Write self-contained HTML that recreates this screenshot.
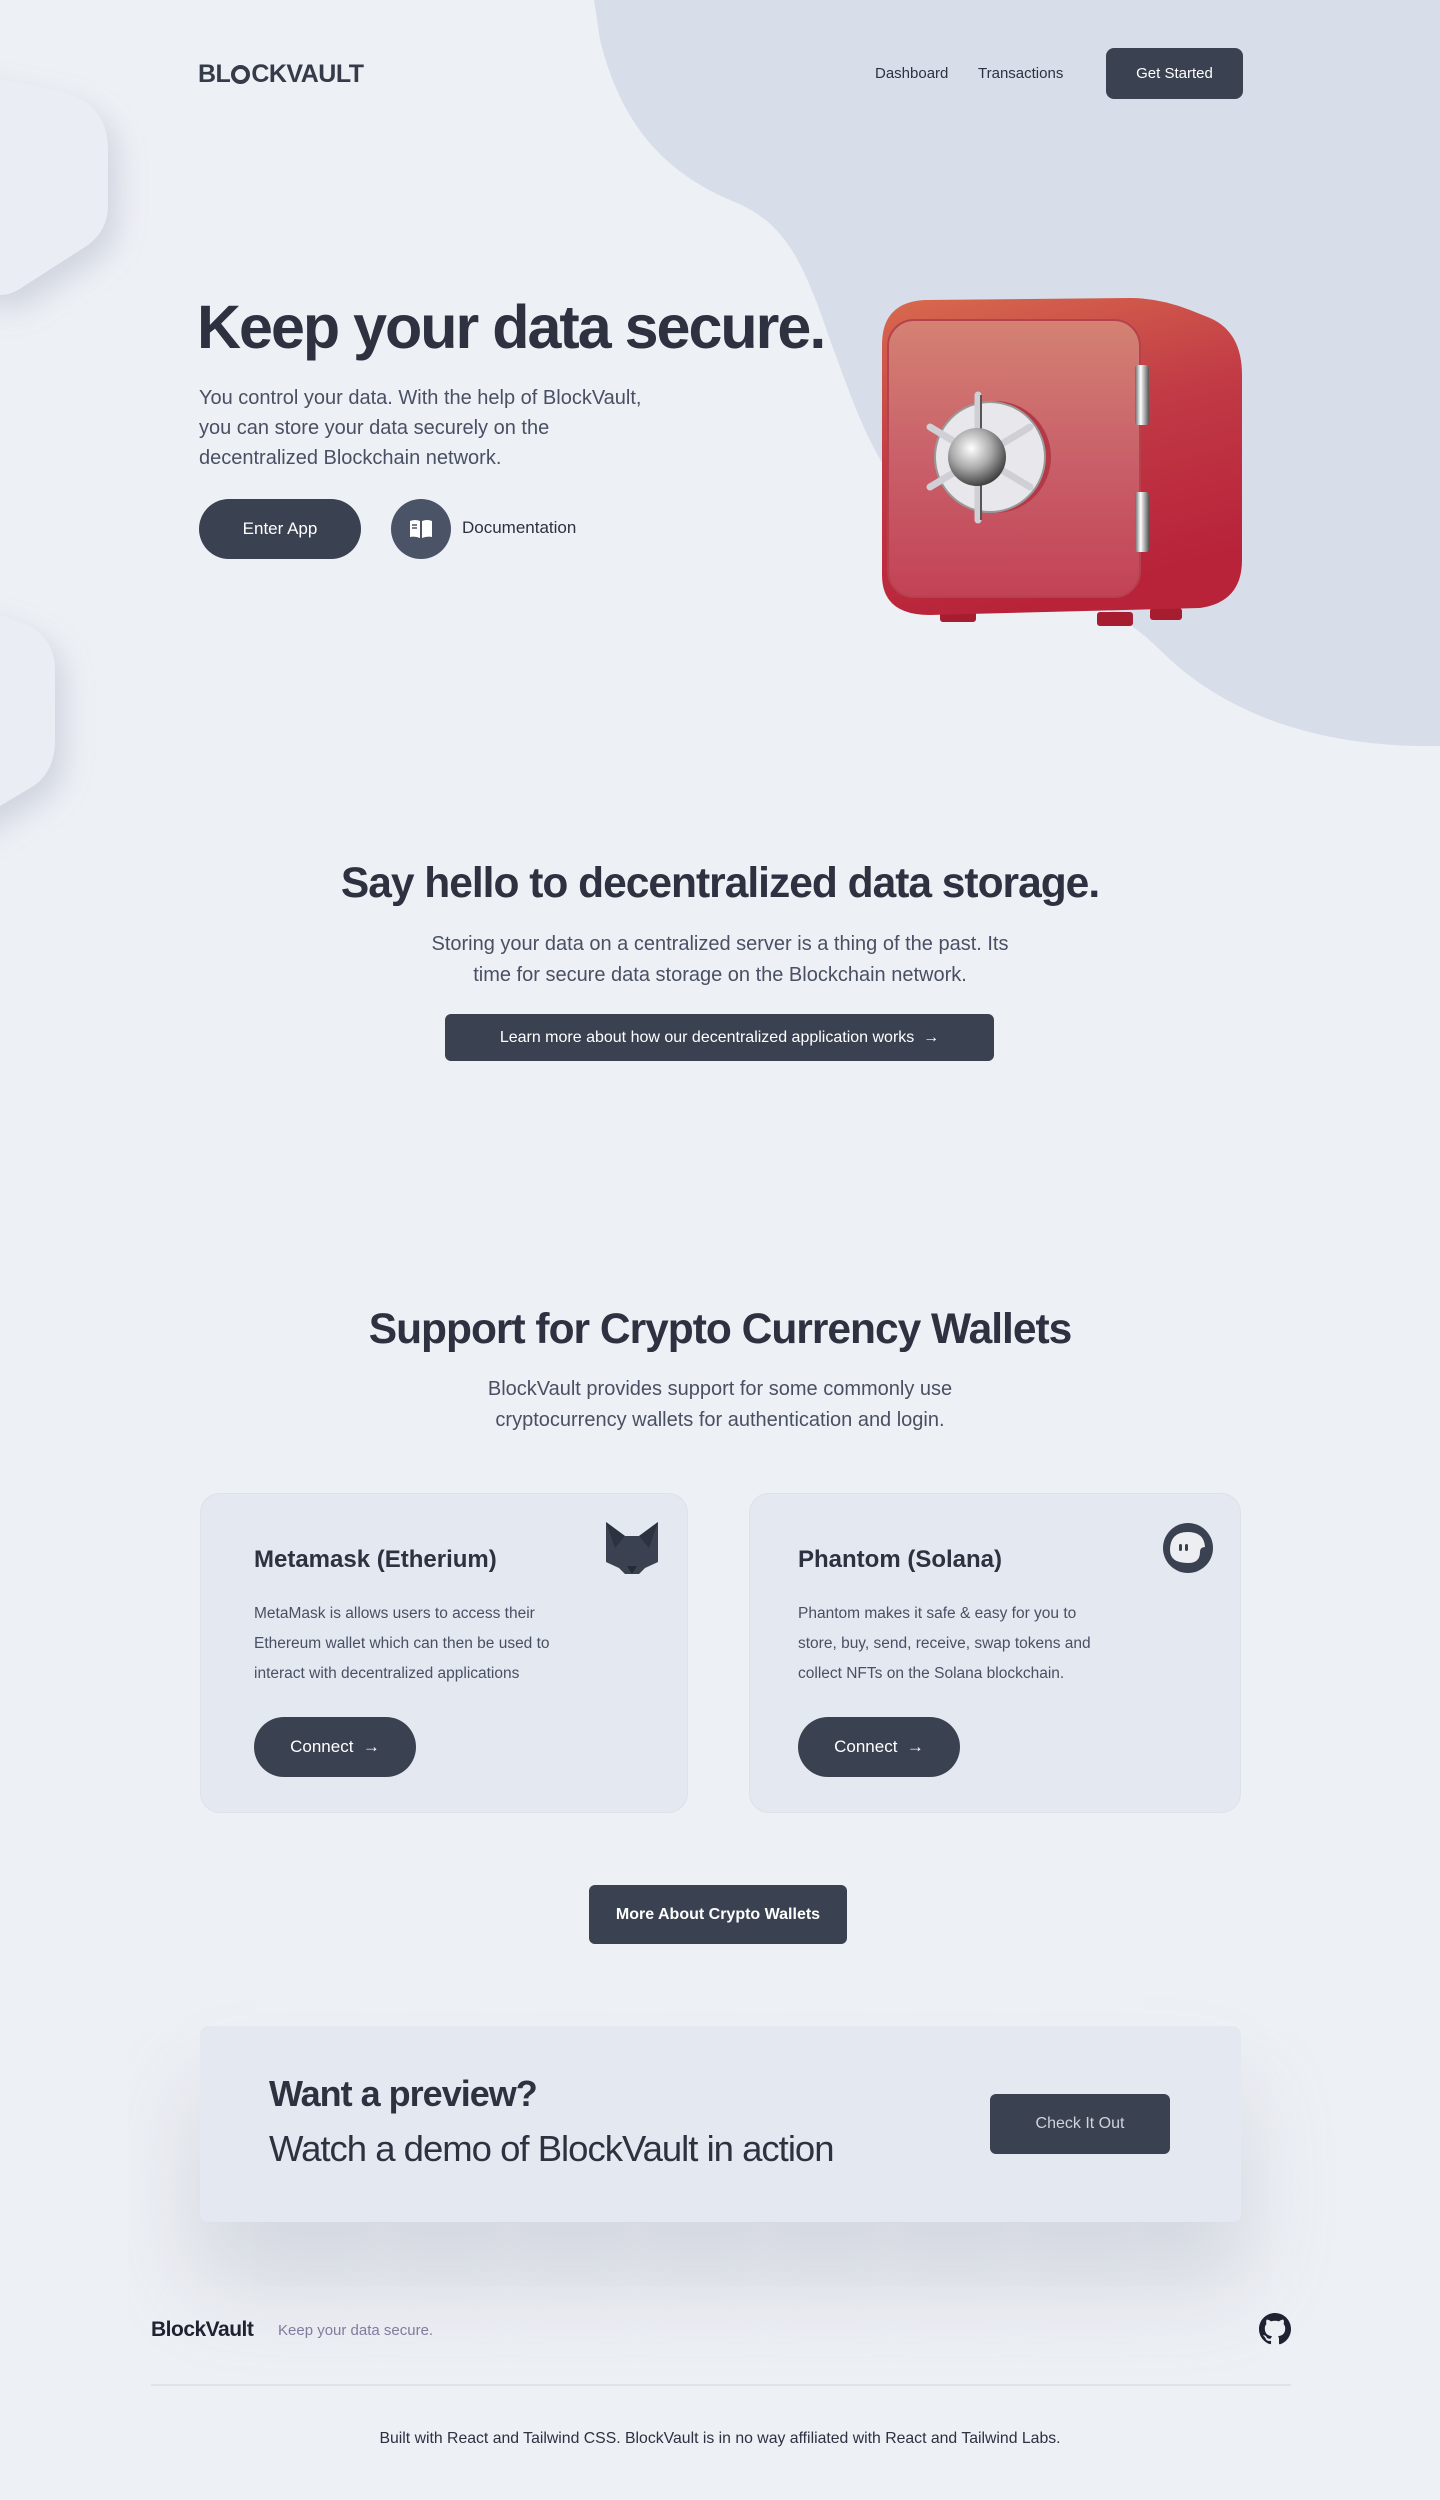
<!DOCTYPE html>
<html><head><meta charset="utf-8">
<style>
*{margin:0;padding:0;box-sizing:border-box}
body{width:1440px;height:2500px;background:#edf0f5;font-family:"Liberation Sans",sans-serif;color:#2d3140;position:relative;overflow:hidden}
.abs{position:absolute}
.btn{position:absolute;background:#3a4150;color:#fff;display:flex;align-items:center;justify-content:center}
h1,h2{font-weight:700;letter-spacing:-1px}
</style></head><body>
<svg class="abs" style="left:0;top:0" width="1440" height="950">
<defs>
<filter id="sh" x="-50%" y="-50%" width="200%" height="200%"><feDropShadow dx="10" dy="14" stdDeviation="14" flood-color="#9aa3b5" flood-opacity="0.35"/></filter>
</defs>
<path d="M594 0 L1440 0 L1440 746 C1330 748 1230 720 1160 650 C1100 590 1000 560 950 530 C880 490 860 420 830 340 C800 250 780 220 730 200 C660 170 620 120 600 40 Z" fill="#d8dee9"/>
<path d="M-40 70 L55 90 Q108 100 108 150 L108 205 Q108 230 88 245 L18 290 Q0 300 -20 290 L-40 280 Z" fill="#eaedf3" filter="url(#sh)"/>
<path d="M-40 600 L28 625 Q55 640 55 670 L55 740 Q55 770 35 785 L-40 830 Z" fill="#eaedf3" filter="url(#sh)"/>
</svg>

<div class="abs" style="left:198px;top:60px;font-size:25px;font-weight:900;letter-spacing:-0.5px;color:#363b4a">BL<span style="display:inline-block;width:19px;height:19px;border-radius:50%;border:4px solid #363b4a;vertical-align:-2px;margin:0 1px"></span>CKVAULT</div>
<div class="abs" style="left:875px;top:65px;font-size:15px;color:#2d3140">Dashboard</div>
<div class="abs" style="left:978px;top:65px;font-size:15px;color:#2d3140">Transactions</div>
<div class="btn" style="left:1106px;top:48px;width:137px;height:51px;border-radius:8px;font-size:15px">Get Started</div>

<h1 class="abs" style="left:197px;top:292px;font-size:61px;color:#2d3140;letter-spacing:-2px;white-space:nowrap">Keep your data secure.</h1>
<div class="abs" style="left:199px;top:383px;font-size:20px;line-height:30px;color:#4a5064;width:460px">You control your data. With the help of BlockVault, you can store your data securely on the decentralized Blockchain network.</div>
<div class="btn" style="left:199px;top:499px;width:162px;height:60px;border-radius:30px;font-size:17px">Enter App</div>
<div class="btn" style="left:391px;top:499px;width:60px;height:60px;border-radius:50%;background:#4b5366">
<svg width="26" height="22" viewBox="0 0 26 22"><path d="M2 3 Q7 1 12 3 L12 20 Q7 18 2 19Z M14 3 Q19 1 24 3 L24 19 Q19 18 14 20Z" fill="#fff"/><path d="M4 7h5M4 10h5" stroke="#4b5366" stroke-width="1.5"/></svg></div>
<div class="abs" style="left:462px;top:518px;font-size:17px;color:#2d3140">Documentation</div>

<svg class="abs" style="left:870px;top:290px" width="390" height="350" viewBox="870 290 390 350">
<defs>
<linearGradient id="sb" x1="0" y1="0" x2="0.3" y2="1"><stop offset="0" stop-color="#d86a4e"/><stop offset="0.5" stop-color="#c13a45"/><stop offset="1" stop-color="#b8233a"/></linearGradient>
<linearGradient id="sd" x1="0" y1="0" x2="0" y2="1"><stop offset="0" stop-color="#d48272"/><stop offset="0.5" stop-color="#c9606a"/><stop offset="1" stop-color="#c24255"/></linearGradient>
<radialGradient id="kn" cx="0.4" cy="0.35" r="0.7"><stop offset="0" stop-color="#fff"/><stop offset="0.5" stop-color="#aaa"/><stop offset="1" stop-color="#333"/></radialGradient>
<linearGradient id="mt" x1="0" x2="1"><stop offset="0" stop-color="#666"/><stop offset="0.4" stop-color="#fff"/><stop offset="1" stop-color="#555"/></linearGradient>
</defs>
<rect x="940" y="608" width="36" height="14" rx="3" fill="#a51d2e"/><rect x="1097" y="612" width="36" height="14" rx="3" fill="#a51d2e"/><rect x="1150" y="608" width="32" height="12" rx="3" fill="#a51d2e"/>
<path d="M925 300 L1130 298 Q1160 298 1190 310 L1210 318 Q1242 332 1242 375 L1242 560 Q1242 602 1200 608 L930 615 Q882 615 882 575 L882 345 Q882 302 925 300Z" fill="url(#sb)"/>
<rect x="888" y="320" width="252" height="277" rx="26" fill="url(#sd)" stroke="#b5414c" stroke-width="2"/>
<rect x="1135" y="365" width="14" height="60" rx="3" fill="url(#mt)"/><rect x="1135" y="492" width="14" height="60" rx="3" fill="url(#mt)"/>
<circle cx="995" cy="457" r="56" fill="#b43846"/>
<circle cx="990" cy="457" r="55" fill="#e8e8ec" stroke="#999" stroke-width="2"/>
<g stroke="#cfcfd5" stroke-width="7" stroke-linecap="round">
<line x1="978" y1="395" x2="978" y2="520"/>
<line x1="930" y1="427" x2="1030" y2="487"/>
<line x1="930" y1="487" x2="1030" y2="427"/>
</g>
<g stroke="#555" stroke-width="2"><line x1="981" y1="395" x2="981" y2="520"/></g>
<circle cx="977" cy="457" r="29" fill="url(#kn)"/>
</svg>

<h2 class="abs" style="left:0;width:1440px;text-align:center;top:860px;font-size:42.5px;color:#2d3140">Say hello to decentralized data storage.</h2>
<div class="abs" style="left:0;width:1440px;text-align:center;top:929px;font-size:20px;line-height:31px;color:#4a5064">Storing your data on a centralized server is a thing of the past. Its<br>time for secure data storage on the Blockchain network.</div>
<div class="btn" style="left:445px;top:1014px;width:549px;height:47px;border-radius:6px;font-size:16px">Learn more about how our decentralized application works &nbsp;<b>→</b></div>

<h2 class="abs" style="left:0;width:1440px;text-align:center;top:1306px;font-size:42.5px;color:#2d3140">Support for Crypto Currency Wallets</h2>
<div class="abs" style="left:0;width:1440px;text-align:center;top:1374px;font-size:20px;line-height:31px;color:#4a5064">BlockVault provides support for some commonly use<br>cryptocurrency wallets for authentication and login.</div>

<div class="abs" style="left:200px;top:1493px;width:488px;height:320px;border-radius:20px;background:#e4e8f0;border:1px solid #dde1e8"></div>
<div class="abs" style="left:749px;top:1493px;width:492px;height:320px;border-radius:20px;background:#e4e8f0;border:1px solid #dde1e8"></div>
<div class="abs" style="left:254px;top:1546px;font-size:24px;font-weight:700;color:#2d3140">Metamask (Etherium)</div>
<div class="abs" style="left:798px;top:1546px;font-size:24px;font-weight:700;color:#2d3140">Phantom (Solana)</div>
<div class="abs" style="left:254px;top:1599px;font-size:15.5px;line-height:30px;color:#4a5064;width:330px">MetaMask is allows users to access their Ethereum wallet which can then be used to interact with decentralized applications</div>
<div class="abs" style="left:798px;top:1599px;font-size:15.5px;line-height:30px;color:#4a5064;width:310px">Phantom makes it safe &amp; easy for you to store, buy, send, receive, swap tokens and collect NFTs on the Solana blockchain.</div>
<div class="btn" style="left:254px;top:1717px;width:162px;height:60px;border-radius:30px;font-size:17px">Connect &nbsp;<b>→</b></div>
<div class="btn" style="left:798px;top:1717px;width:162px;height:60px;border-radius:30px;font-size:17px">Connect &nbsp;<b>→</b></div>
<svg class="abs" style="left:605px;top:1522px" width="54" height="52" viewBox="0 0 54 52"><path d="M1 0 L20 14 L34 14 L53 0 L53 40 L40 46 L34 52 L20 52 L14 46 L1 40Z" fill="#3a4150"/><path d="M1 0 L20 14 L10 26Z M53 0 L34 14 L44 26Z" fill="#2d3240"/><path d="M22 44 L27 52 L32 44Z" fill="#262a35"/></svg>
<svg class="abs" style="left:1163px;top:1523px" width="50" height="50" viewBox="0 0 50 50"><circle cx="25" cy="25" r="25" fill="#3a4150"/><path d="M7 27 Q7 9 25 9 Q41 9 42 24 Q37 24 37 29 Q37 40 25 40 Q7 40 7 27Z" fill="#eceef2"/><rect x="16" y="21" width="3" height="7" rx="1.5" fill="#3a4150"/><rect x="22" y="21" width="3" height="7" rx="1.5" fill="#3a4150"/></svg>

<div class="btn" style="left:589px;top:1885px;width:258px;height:59px;border-radius:6px;font-size:16px;font-weight:700">More About Crypto Wallets</div>

<div class="abs" style="left:200px;top:2026px;width:1041px;height:196px;border-radius:8px;background:#e4e8f0;box-shadow:0 60px 90px rgba(150,155,170,0.3)"></div>
<div class="abs" style="left:269px;top:2073px;font-size:36px;font-weight:700;letter-spacing:-1px;color:#2d3140">Want a preview?</div>
<div class="abs" style="left:269px;top:2128px;font-size:36.5px;font-weight:300;letter-spacing:-1px;color:#2d3140">Watch a demo of BlockVault in action</div>
<div class="btn" style="left:990px;top:2094px;width:180px;height:60px;border-radius:6px;font-size:16px;color:#cfd3dc">Check It Out</div>

<div class="abs" style="left:151px;top:2318px;font-size:21px;font-weight:700;letter-spacing:-0.5px;color:#1f2230">BlockVault</div>
<div class="abs" style="left:278px;top:2322px;font-size:15px;color:#7f7c9e">Keep your data secure.</div>
<svg class="abs" style="left:1259px;top:2313px" width="32" height="32" viewBox="0 0 16 16"><path fill="#1f2230" d="M8 0C3.58 0 0 3.580 0 8c0 3.54 2.29 6.53 5.470 7.59.4.07.55-.17.55-.38v-1.33c-2.23.48-2.7-1.07-2.7-1.07-.36-.92-.89-1.170-.89-1.17-.73-.5.06-.49.06-.49.8.06 1.23.82 1.23.82.72 1.23 1.87.87 2.33.67.07-.52.28-.87.51-1.07-1.78-.2-3.65-.89-3.65-3.95 0-.87.31-1.59.82-2.15-.08-.2-.36-1.02.08-2.12 0 0 .67-.21 2.2.82.64-.18 1.32-.27 2-.27.68 0 1.36.09 2 .27 1.53-1.04 2.2-.82 2.2-.82.44 1.1.16 1.92.08 2.12.51.56.82 1.27.82 2.15 0 3.07-1.87 3.75-3.65 3.95.29.25.54.73.54 1.48v2.2c0 .21.15.46.55.38A8.01 8.01 0 0016 8c0-4.42-3.58-8-8-8z"/></svg>
<div class="abs" style="left:151px;top:2384px;width:1140px;height:2px;background:#e1e3e9"></div>
<div class="abs" style="left:0;width:1440px;text-align:center;top:2430px;font-size:15.8px;color:#2d3140">Built with React and Tailwind CSS. BlockVault is in no way affiliated with React and Tailwind Labs.</div>
</body></html>
